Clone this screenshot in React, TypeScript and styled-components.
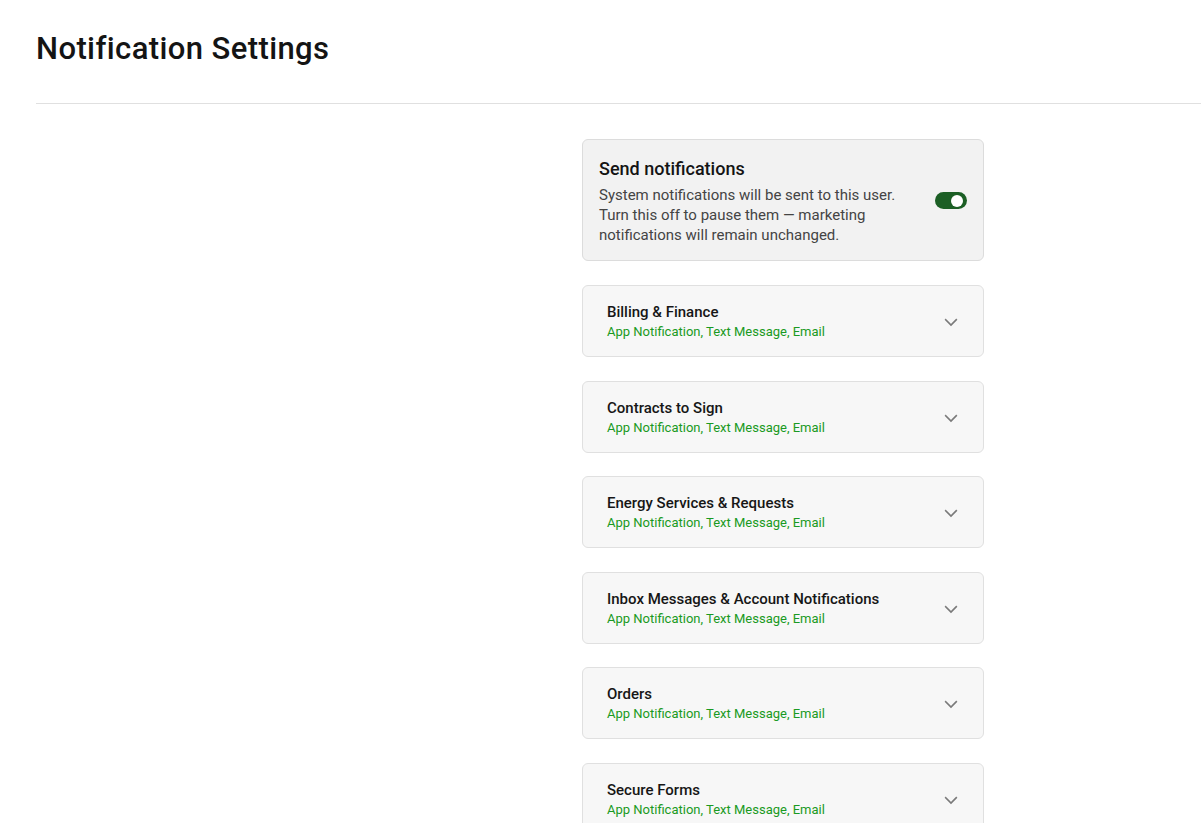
import React from "react";
import styled, { createGlobalStyle } from "styled-components";

const Global = createGlobalStyle`
  html, body { margin: 0; padding: 0; background: #fff; }
  body { font-family: Roboto, "Noto Sans", Arial, sans-serif; color: #111; overflow: hidden; }
  * { box-sizing: border-box; }
`;

const Page = styled.div`
  padding-left: 36px;
  height: 823px;
  overflow: hidden;
`;

const Header = styled.header`
  height: 104px;
  border-bottom: 1px solid #e0e0e0;
  padding-top: 29px;
`;

const Title = styled.h1`
  margin: 0;
  font-size: 31px;
  line-height: 40px;
  font-weight: 500;
  color: #141414;
  letter-spacing: 0.4px;
`;

const Body = styled.main`
  display: grid;
  grid-template-columns: 546px 402px;
  padding-top: 35px;
`;

const Column = styled.div`
  grid-column: 2;
  display: flex;
  flex-direction: column;
  gap: 23.6px;
`;

const MasterCard = styled.section`
  background: #f2f2f2;
  border: 1px solid #dcdcdc;
  border-radius: 6px;
  padding: 17px 16px 15px 16px;
  display: flex;
  align-items: center;
  gap: 24px;
  margin-bottom: 0.4px;
`;

const MasterText = styled.div`
  flex: 1;
`;

const MasterTitle = styled.div`
  font-size: 18px;
  line-height: 24px;
  font-weight: 500;
  color: #141414;
  margin-bottom: 4px;
`;

const MasterDesc = styled.div`
  font-size: 15px;
  line-height: 20px;
  color: #444;
  max-width: 310px;
`;

const Toggle = styled.div<{ $on: boolean }>`
  position: relative;
  width: 32px;
  height: 17px;
  border-radius: 9px;
  background: ${(p) => (p.$on ? "#1c5f25" : "#bbb")};
  flex-shrink: 0;
  margin-top: -1px;
  &::after {
    content: "";
    position: absolute;
    top: 2.5px;
    left: ${(p) => (p.$on ? "16px" : "3px")};
    width: 12px;
    height: 12px;
    border-radius: 50%;
    background: #fff;
  }
`;

const Card = styled.div`
  background: #f7f7f7;
  border: 1px solid #e0e0e0;
  border-radius: 6px;
  padding: 16px 23px 0 24px;
  display: flex;
  align-items: flex-start;
  height: 72px;
`;

const CardText = styled.div`
  flex: 1;
`;

const CardTitle = styled.div`
  font-size: 15px;
  line-height: 20px;
  font-weight: 500;
  color: #161616;
`;

const CardSub = styled.div`
  font-size: 13px;
  line-height: 20px;
  color: #1a9a23;
`;

const Chevron = styled.svg`
  width: 18px;
  height: 18px;
  align-self: center;
  margin-top: -14px;
  color: #7a7a7a;
`;

const categories = [
  "Billing & Finance",
  "Contracts to Sign",
  "Energy Services & Requests",
  "Inbox Messages & Account Notifications",
  "Orders",
  "Secure Forms",
];

export default function App() {
  return (
    <>
      <Global />
      <Page>
        <Header>
          <Title>Notification Settings</Title>
        </Header>
        <Body>
          <Column>
            <MasterCard>
              <MasterText>
                <MasterTitle>Send notifications</MasterTitle>
                <MasterDesc>
                  System notifications will be sent to this user. Turn this off to pause them — marketing
                  notifications will remain unchanged.
                </MasterDesc>
              </MasterText>
              <Toggle $on={true} />
            </MasterCard>
            {categories.map((c) => (
              <Card key={c}>
                <CardText>
                  <CardTitle>{c}</CardTitle>
                  <CardSub>App Notification, Text Message, Email</CardSub>
                </CardText>
                <Chevron viewBox="0 0 24 24" fill="none" stroke="currentColor" strokeWidth="2.2" strokeLinecap="square">
                  <path d="M5 9l7 7 7-7" />
                </Chevron>
              </Card>
            ))}
          </Column>
        </Body>
      </Page>
    </>
  );
}
